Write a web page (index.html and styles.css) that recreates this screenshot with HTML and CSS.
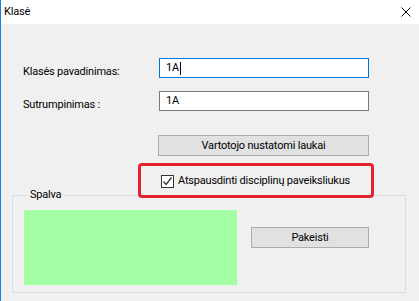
FILE: index.html
```html
<!DOCTYPE html>
<html lang="lt">
<head>
  <meta charset="UTF-8">
  <meta name="viewport" content="width=device-width, initial-scale=1.0">
  <title>Klasė</title>
  <link rel="stylesheet" href="styles.css">
</head>
<body>
  <div class="window">
    <div class="title-bar">
      <span class="title">Klasė</span>
      <svg class="close" width="10" height="10" viewBox="0 0 10 10">
        <path d="M0.5 0.5 L9.5 9.5 M9.5 0.5 L0.5 9.5" stroke="#000" stroke-width="1" fill="none"/>
      </svg>
    </div>

    <div class="content">
      <div class="form-grid">
        <label class="field-label">Klasės pavadinimas:</label>
        <div class="textbox focused">1A<span class="caret"></span></div>

        <label class="field-label">Sutrumpinimas :</label>
        <div class="textbox">1A</div>

        <div></div>
        <button class="win-btn wide">Vartotojo nustatomi laukai</button>

        <div></div>
        <label class="check-row">
          <span class="checkbox">
            <svg width="11" height="11" viewBox="0 0 11 11">
              <path d="M1.5 5.5 L4 8.5 L9.5 1.5" stroke="#333" stroke-width="1.3" fill="none"/>
            </svg>
          </span>
          Atspausdinti disciplinų paveiksliukus
        </label>
      </div>

      <fieldset class="group">
        <legend>Spalva</legend>
        <div class="group-body">
          <div class="swatch"></div>
          <button class="win-btn change">Pakeisti</button>
        </div>
      </fieldset>

      <!-- red highlight drawn over the checkbox -->
      <div class="highlight"></div>
    </div>
  </div>
</body>
</html>
```

FILE: styles.css
```css
body {
  margin: 0;
  font-family: Roboto, 'Liberation Sans', sans-serif;
  font-size: 11px;
  letter-spacing: -0.2px;
  color: #000;
  background: #f0f0f0;
}

.window {
  width: 419px;
  height: 301px;
  box-sizing: border-box;
  border-left: 1px solid #1883d7;
  background: #f0f0f0;
  overflow: hidden;
}

.title-bar {
  height: 24px;
  background: #fff;
  display: flex;
  align-items: center;
  justify-content: space-between;
  padding: 0 8px 0 3px;
}

.title {
  line-height: 24px;
}

.content {
  position: relative;
  padding: 34px 0 0 22px;
}

.form-grid {
  display: grid;
  grid-template-columns: 136px 210px;
  row-gap: 12px;
}

.field-label {
  line-height: 14px;
  padding-top: 7px;
}

.textbox {
  height: 20px;
  box-sizing: border-box;
  border: 1px solid #7a7a7a;
  background: #fff;
  padding: 0 6px;
  line-height: 18px;
  display: flex;
  align-items: center;
}

.textbox.focused {
  border-color: #0078d7;
}

.caret {
  width: 1px;
  height: 13px;
  background: #000;
  margin-left: 1px;
}

.win-btn {
  font-family: inherit;
  font-size: 11px;
  letter-spacing: inherit;
  color: #000;
  background: #e1e1e1;
  border: 1px solid #adadad;
  padding: 0;
  height: 21px;
  box-sizing: border-box;
}

.wide {
  width: 211px;
  margin: 11px 0 0 -1px;
}

.check-row {
  display: flex;
  align-items: center;
  gap: 4px;
  margin: 5px 0 0 2px;
  line-height: 16px;
  white-space: nowrap;
}

.checkbox {
  width: 13px;
  height: 13px;
  box-sizing: border-box;
  border: 1px solid #333;
  background: #fff;
  display: flex;
  align-items: center;
  justify-content: center;
}

.group {
  width: 394px;
  box-sizing: border-box;
  margin: -2px 0 0 -11px;
  padding: 0 11px 7px;
  border: 1px solid #dcdcdc;
  min-inline-size: 0;
}

.group legend {
  padding: 0 2px;
  margin-left: 4px;
  line-height: 16px;
}

.group-body {
  display: flex;
  align-items: flex-start;
  padding-top: 7px;
}

.swatch {
  width: 213px;
  height: 75px;
  background: #a4ffa4;
}

.change {
  width: 118px;
  margin: 17px 0 0 14px;
}

.highlight {
  position: absolute;
  left: 137px;
  top: 139px;
  width: 236px;
  height: 35px;
  box-sizing: border-box;
  border: 3px solid #e8222c;
  border-radius: 4px;
}
```
